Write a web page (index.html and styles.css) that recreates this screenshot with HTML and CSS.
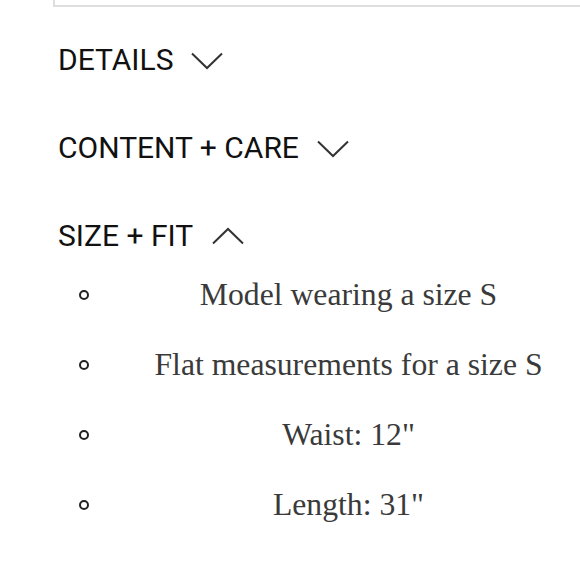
FILE: index.html
```html
<!DOCTYPE html>
<html>
<head>
<meta charset="utf-8">
<link rel="stylesheet" href="styles.css">
</head>
<body>
<div class="page">
  <div class="topbox"></div>
  <section class="acc">
    <div class="acc-head">
      <span class="acc-title">DETAILS</span>
      <svg class="chev" width="32" height="18" viewBox="0 0 32 18"><polyline points="1,1.5 16,16 31,1.5" fill="none" stroke="#333" stroke-width="2"/></svg>
    </div>
  </section>
  <section class="acc">
    <div class="acc-head">
      <span class="acc-title">CONTENT + CARE</span>
      <svg class="chev" width="32" height="18" viewBox="0 0 32 18"><polyline points="1,1.5 16,16 31,1.5" fill="none" stroke="#333" stroke-width="2"/></svg>
    </div>
  </section>
  <section class="acc open">
    <div class="acc-head">
      <span class="acc-title">SIZE + FIT</span>
      <svg class="chev up" width="32" height="18" viewBox="0 0 32 18"><polyline points="1,16.5 16,2 31,16.5" fill="none" stroke="#333" stroke-width="2"/></svg>
    </div>
    <ul class="fit">
      <li><span class="txt">Model wearing a size S</span></li>
      <li><span class="txt">Flat measurements for a size S</span></li>
      <li><span class="txt">Waist: 12"</span></li>
      <li><span class="txt">Length: 31"</span></li>
    </ul>
  </section>
</div>
</body>
</html>
```

FILE: styles.css
```css
html, body {
  margin: 0;
  padding: 0;
  background: #fff;
}
.page {
  width: 580px;
  height: 580px;
  overflow: hidden;
}
.topbox {
  margin-left: 53px;
  width: 600px;
  height: 5px;
  border-left: 2px solid #dedede;
  border-bottom: 2px solid #dedede;
}
.acc-head {
  display: flex;
  align-items: center;
  padding-left: 58px;
  height: 88px;
}
.acc:first-of-type .acc-head {
  margin-top: 8px;
}
.acc-title {
  font-family: Roboto, "Liberation Sans", sans-serif;
  font-size: 30px;
  color: #111;
  letter-spacing: 0;
}
.chev {
  margin-left: 18px;
  margin-top: 4px;
}
.chev.up {
  margin-left: 19px;
  margin-top: 2px;
}
.fit {
  list-style: none;
  margin: 0;
  padding: 0;
  margin-top: -19px;
}
.fit li {
  display: flex;
  align-items: center;
  height: 70px;
}
.fit li::before {
  content: "";
  width: 6px;
  height: 6px;
  border: 2px solid #222;
  border-radius: 50%;
  margin-left: 79px;
  flex: none;
}
.txt {
  flex: 1;
  text-align: center;
  font-family: "Liberation Serif", "Times New Roman", serif;
  font-size: 31.7px;
  color: #3a3a3a;
  padding-left: 28px;
}
```
